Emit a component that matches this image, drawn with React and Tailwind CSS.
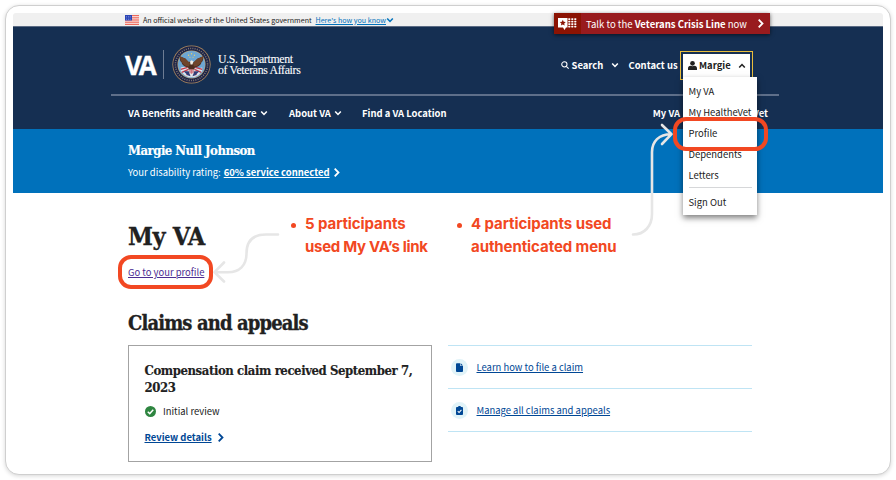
import React from "react";

const SANS = "font-['Noto_Sans_CJK_SC','Open_Sans',sans-serif]";
const SLAB = "font-['DejaVu_Serif_Condensed','DejaVu_Serif',serif]";

function Chevron({ dir = "down", className = "" }) {
  const d = {
    down: "M1.5 3.2 5 6.8 8.5 3.2",
    up: "M1.5 6.8 5 3.2 8.5 6.8",
    right: "M3 0.8 7.2 5 3 9.2",
  }[dir];
  return (
    <svg viewBox="0 0 10 10" className={"shrink-0 " + className} fill="none" stroke="currentColor" strokeWidth="2">
      <path d={d} />
    </svg>
  );
}

function Flag() {
  return (
    <svg viewBox="0 0 14 10" className="h-2.5 w-3.5 shrink-0">
      <rect width="14" height="10" fill="#fbeeee" />
      {[0, 2.2, 4.4, 6.6, 8.8].map((y) => (
        <rect key={y} y={y} width="14" height="1.2" fill="#ee6a5c" />
      ))}
      <rect width="7" height="5.5" fill="#2c45b5" />
      {[1.2, 3, 4.8].map((x) => (
        <g key={x} fill="#9fb0ee">
          <rect x={x} y="1" width=".7" height=".7" />
          <rect x={x} y="2.6" width=".7" height=".7" />
          <rect x={x} y="4.2" width=".7" height=".7" />
        </g>
      ))}
    </svg>
  );
}

function Seal() {
  return (
    <svg viewBox="0 0 40 40" className="ml-2 size-[39px] shrink-0">
      <circle cx="20" cy="20" r="19.6" fill="#b08a5e" />
      <circle cx="20" cy="20" r="18.8" fill="#1b2348" />
      <circle cx="20" cy="20" r="16.5" fill="none" stroke="#857a70" strokeWidth="1.6" strokeDasharray="1 1.3" />
      <circle cx="20" cy="20" r="14.4" fill="#c2a36c" />
      <circle cx="20" cy="20" r="13.8" fill="#6da6d2" />
      <path d="M9 23c3-1 7-1 11 0s8 1 11 0l0 4-4 4-4 2h-6l-4-2-4-4z" fill="#dfe3ea" />
      <path d="M9 25l7-2M10 28l7-3M24 23l7 2M23 25l7 3M15 31l3-4M22 27l3 4" stroke="#c23a4b" strokeWidth="1.3" />
      <path d="M12 27l4 4 3 1-2-5zM28 27l-4 4-3 1 2-5z" fill="#303e78" />
      <path d="M8 11.500c-.3 3 .2 5 2 6.500-.2 2 3 4.500 6.500 5l1.500 4 2 2 2-2 1.500-4c3.500-.5 6.700-3 6.500-5 1.800-1.500 2.300-3.500 2-6.500l-6 2.500-4 4-1.500-1h-2l-2 1-2.500-4z" fill="#4d2d1f" />
      <path d="M8 11.500l6 2.500 4.500 4.500-1 3.500c-4 0-8.500-3-9.500-10.500M32 11.500l-6 2.500-4.500 4.500 1 3.500c4 0 8.500-3 9.500-10.500" fill="#6f452b" />
      <path d="M18.500 17l1.500-1.400 2 1-1 3.400h-2z" fill="#f1eee4" />
      <path d="M17.500 25h5l-1 4.500h-3z" fill="#e6e7eb" />
      <path d="M18.700 25v4M20 25v4.500M21.300 25v4" stroke="#c23a4b" strokeWidth=".7" />
      <g fill="#e9cf69">
        <circle cx="17" cy="10.5" r=".7" /><circle cx="20" cy="9" r=".7" /><circle cx="23" cy="10.5" r=".7" />
        <circle cx="18.4" cy="12.6" r=".6" /><circle cx="21.6" cy="12.6" r=".6" />
      </g>
    </svg>
  );
}

function CrisisLine() {
  return (
    <div className="absolute left-[541px] top-0 flex h-[21px] w-[216px] items-center bg-[#981b1e] text-[9.55px] text-white shadow-[0_1px_4px_rgba(0,0,0,0.6)]">
      <div className="flex h-full w-[27px] items-center bg-[#8b1303] pl-1">
        <svg viewBox="0 0 19 12" className="h-3 w-[19px]">
          <path d="M0 0h9.5v9.5H8L6.5 12 5 9.5H0z" fill="#fff" />
          <path d="M4.800 1.800l.9 2 2.100.2-1.600 1.400.5 2.100-1.900-1.100-1.900 1.100.5-2.100L1.800 4l2.100-.2z" fill="#8b1303" />
          {[10.2, 13.2, 16.2].map((x) =>
            [0.2, 2.7, 5.2, 7.7].map((y) => <rect key={x + "-" + y} x={x} y={y} width="2.2" height="1.7" rx=".6" fill="#fff" />)
          )}
        </svg>
      </div>
      <span className="ml-[5px] w-[161px] whitespace-nowrap pt-[1.500px]">
        Talk to the <b>Veterans Crisis Line</b> now
      </span>
      <Chevron dir="right" className="ml-[9px] size-[9px]" />
    </div>
  );
}

function Person() {
  return (
    <svg viewBox="0 0 10 10" className="size-[9px] shrink-0" fill="currentColor">
      <circle cx="5" cy="2.6" r="2.6" />
      <path d="M0 10V8.2C0 6.6 1.200 5.700 2.800 5.400c1.400.7 3 .7 4.400 0C8.800 5.700 10 6.600 10 8.200V10z" />
    </svg>
  );
}

function MenuItem({ children }) {
  return <li className="flex h-[21px] items-center whitespace-nowrap">{children}</li>;
}

function UserMenu() {
  return (
    <div className="absolute left-[667px] top-[38px] text-[9.45px] text-[#212121]">
      <div className="h-[29px] w-[73px] border border-[#e8bd3c] p-[2px]">
        <div className="flex h-full items-center bg-white pl-[5px] font-bold">
          <Person />
          <span className="ml-[2px] w-[39px]">Margie</span>
          <Chevron dir="up" className="size-2" />
        </div>
      </div>
      <ul className="absolute left-[3px] top-[26px] h-[138px] w-[74px] bg-white pl-[5.500px] pt-[3.300px] shadow-[0_3px_6px_rgba(0,0,0,0.5)]">
        <MenuItem>My VA</MenuItem>
        <MenuItem>My HealtheVet</MenuItem>
        <MenuItem>Profile</MenuItem>
        <MenuItem>Dependents</MenuItem>
        <MenuItem>Letters</MenuItem>
        <li className="mb-[3px] mt-[2px] h-px w-[63px] bg-[#d6d7d9]" />
        <MenuItem>Sign Out</MenuItem>
      </ul>
    </div>
  );
}

function Header() {
  return (
    <header className="h-[103px] border-t border-[#5b6b84] bg-[#152f52] text-white">
      <div className="ml-[98px] flex h-[69px] w-[668px] items-center border-b-2 border-[#5e6f8a] pl-[14px] pt-2">
        <span className="w-8 font-['Open_Sans',sans-serif] text-[26px] font-bold leading-none tracking-[-0.12em] [-webkit-text-stroke:0.4px_white]">VA</span>
        <span className="ml-[6px] h-[29px] w-px bg-[#6d7c93]" />
        <Seal />
        <span className="ml-[7px] w-[300px] whitespace-nowrap font-['Liberation_Serif',serif] text-[11.800px] leading-[11px] tracking-[-0.33px] [-webkit-text-stroke:0.1px_white]">
          U.S. Department
          <br />
          of Veterans Affairs
        </span>
        <span className="ml-[42.500px] flex items-center whitespace-nowrap pt-0.5 text-[9.45px] font-bold">
          <svg viewBox="0 0 10 10" className="mr-[3px] size-2" fill="none" stroke="currentColor" strokeWidth="1.3">
            <circle cx="4.2" cy="4.2" r="3.3" />
            <path d="M6.6 6.6 9.6 9.6" />
          </svg>
          <span className="w-[39.500px]">Search</span>
          <Chevron className="size-2" />
          <span className="ml-[9.500px]">Contact us</span>
        </span>
      </div>
      <nav className="flex h-[34px] items-center whitespace-nowrap pl-[115px] text-[9.45px] font-bold">
        <span className="w-[132px]">VA Benefits and Health Care</span>
        <Chevron className="size-2" />
        <span className="ml-[21px] w-[45px]">About VA</span>
        <Chevron className="size-2" />
        <span className="ml-5">Find a VA Location</span>
        <span className="ml-auto">My VA</span>
        <span className="ml-[21px] mr-[115px]">My HealtheVet</span>
      </nav>
    </header>
  );
}

function Resource({ icon, children }) {
  return (
    <li className="flex h-[43px] items-center border-b-[1.5px] border-[#bfe4f4] pt-[1.500px]">
      <span className="ml-[3px] flex size-[17px] items-center justify-center rounded-full bg-[#e1f3f8]">{icon}</span>
      <a className="ml-[8.500px] whitespace-nowrap text-[9.45px] text-[#004795] underline underline-offset-1">{children}</a>
    </li>
  );
}

const FileIcon = (
  <svg viewBox="0 0 8 10" className="h-[9px] w-[7px]" fill="#004795">
    <path d="M1 0h3.8v3.2H8V9a1 1 0 0 1-1 1H1a1 1 0 0 1-1-1V1a1 1 0 0 1 1-1z" />
    <path d="M5.4 0 8 2.6H5.4z" />
  </svg>
);

const ClipboardIcon = (
  <svg viewBox="0 0 8 10" className="h-[9px] w-[7px]">
    <path d="M1 1h1.5a1.5 1.5 0 0 1 3 0H7a1 1 0 0 1 1 1v7a1 1 0 0 1-1 1H1a1 1 0 0 1-1-1V2a1 1 0 0 1 1-1z" fill="#004795" />
    <path d="M2 5.8 3.5 7.3 6.2 4.4" fill="none" stroke="#fff" strokeWidth="1.2" />
  </svg>
);

function Note({ className, children }) {
  return (
    <div className={"absolute flex whitespace-nowrap font-['Inter',sans-serif] text-[15px] font-bold leading-[22.5px] tracking-[-0.08px] text-[#f24822] " + className}>
      <span className="mr-[9.5px] mt-[9.5px] size-[5px] rounded-full bg-[#f24822]" />
      <p>{children}</p>
    </div>
  );
}

function Annotations() {
  return (
    <>
      <Note className="left-[290.500px] top-[213px]">
        5 participants
        <br />
        <span className="tracking-[-0.3px]">used My VA’s link</span>
      </Note>
      <Note className="left-[456.500px] top-[213px]">
        4 participants used
        <br />
        authenticated menu
      </Note>
      <svg viewBox="0 0 896 480" className="pointer-events-none absolute left-0 top-0 h-[480px] w-[896px]" fill="none" stroke="#e6e6e6" strokeWidth="2.6" strokeLinecap="round" strokeLinejoin="round">
        <path d="M278 234.5H266C253 234.5 246.500 241 246.500 253.500C246.500 265.500 239.500 272.200 228 272.200H214.500M224 262.500 214.500 272.200 224 281.500" />
        <path d="M633 234.500C644.500 234.500 652 226 652 214V152C652 141.500 659 134.200 671 134.200M662 125 671.500 134.200 662 144" />
      </svg>
      <div className="absolute left-[118px] top-[255px] h-[34px] w-[95px] rounded-[13px] border-4 border-[#f24822]" />
      <div className="absolute left-[672.5px] top-[117px] h-[34px] w-[95px] rounded-[13px] border-4 border-[#f24822]" />
    </>
  );
}

export default function App() {
  return (
    <div className={"relative h-[480px] w-[896px] overflow-hidden bg-white p-[5px] text-[#212121] " + SANS}>
      <div className="h-[470px] w-[886px] rounded-[14px] border-[1.5px] border-[#cfcfcf] bg-white p-[7px] shadow-[0_1px_4px_rgba(0,0,0,0.16)]">
        <div className="relative">
          <div className="flex h-[13px] items-center whitespace-nowrap rounded-t-[3px] bg-[#f0f0f0] pl-[112px] text-[7.120px]">
            <Flag />
            <span className="ml-1 w-[169px] pt-px">An official website of the United States government</span>
            <span className="ml-[3.500px] pt-px text-[#0071bb] underline">Here's how you know</span>
            <Chevron className="size-2 text-[#0071bb]" />
          </div>
          <Header />
          <section className="h-16 bg-[#0071bb] pl-[115px] pt-[13px] text-white">
            <h2 className={"text-[13px] font-bold leading-[18px] tracking-[-0.038em] [-webkit-text-stroke:0.2px_currentColor] " + SLAB}>Margie Null Johnson</h2>
            <p className="mt-1 flex h-4 items-center whitespace-nowrap text-[9.45px]">
              Your disability rating:
              <b className="ml-[3px] underline underline-offset-1">60% service connected</b>
              <Chevron dir="right" className="ml-[2px] size-[9px]" />
            </p>
          </section>
          <main className="pl-[115px] pt-[28px]">
            <h1 className={"text-[25px] font-bold leading-[32px] tracking-[-0.015em] [-webkit-text-stroke:0.3px_currentColor] " + SLAB}>My VA</h1>
            <a className="mt-[10px] block h-[18px] text-[9.45px] leading-[18px] text-[#4c2c92] underline underline-offset-1">Go to your profile</a>
            <h2 className={"mt-[30px] text-[20px] font-bold leading-6 tracking-[-0.044em] [-webkit-text-stroke:0.3px_currentColor] " + SLAB}>Claims and appeals</h2>
            <div className="mt-[9.500px] flex gap-4">
              <article className="h-[117px] w-[304px] border border-[#a3a3a3] pl-[15.5px] pt-4">
                <h3 className={"whitespace-nowrap text-[13px] font-bold leading-[17px] tracking-[-0.032em] [-webkit-text-stroke:0.15px_currentColor] " + SLAB}>
                  Compensation claim received September 7,
                  <br />
                  2023
                </h3>
                <p className="mt-[7.500px] flex h-4 items-center text-[9.45px]">
                  <svg viewBox="0 0 12 12" className="mr-[7.500px] size-[11px]">
                    <circle cx="6" cy="6" r="6" fill="#2e8540" />
                    <path d="M3 6.200 5.200 8.300 9 4.200" fill="none" stroke="#fff" strokeWidth="1.6" />
                  </svg>
                  Initial review
                </p>
                <p className="mt-[10.500px] flex h-4 items-center text-[9.45px] font-bold text-[#004795]">
                  <span className="underline underline-offset-1">Review details</span>
                  <Chevron dir="right" className="ml-1 size-[9px]" />
                </p>
              </article>
              <ul className="h-[88px] w-[304px] border-t-[1.5px] border-[#bfe4f4]">
                <Resource icon={FileIcon}>Learn how to file a claim</Resource>
                <Resource icon={ClipboardIcon}>Manage all claims and appeals</Resource>
              </ul>
            </div>
          </main>
          <CrisisLine />
          <UserMenu />
        </div>
      </div>
      <Annotations />
    </div>
  );
}
